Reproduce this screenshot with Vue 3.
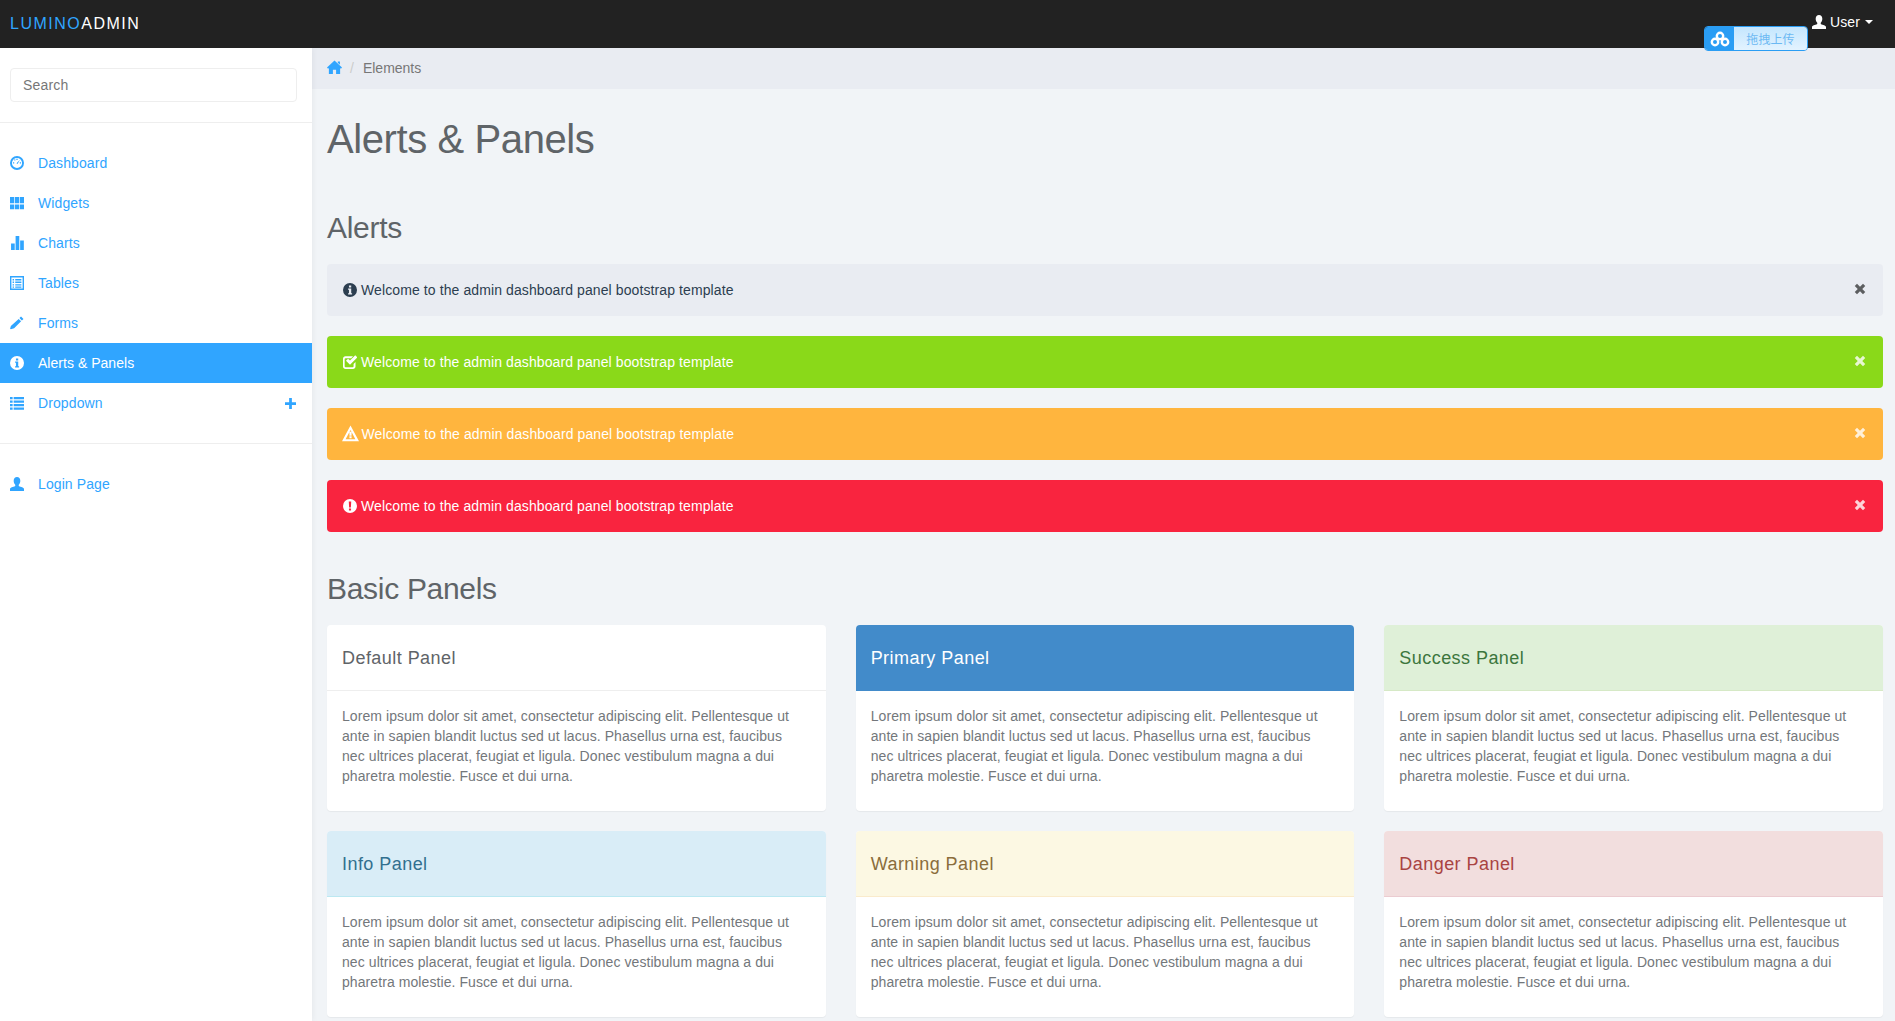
<script setup>
const icons = {
  dashboard: 'M8 0a8 8 0 1 0 0 16A8 8 0 1 0 8 0zm0 2.200a5.800 5.800 0 1 1 0 11.600A5.800 5.800 0 1 1 8 2.200zM7.300 3.200h1.400v1.400H7.300zM3.400 7.200h1.400v1.400H3.400zM11.200 7.200h1.400v1.400h-1.400zM4.600 4.400l1-.8.9 1-1 .8zM11.400 4.400l-2.800 4.800-1.200-.9z',
  th: 'M0 1h4.800v7.400H0zM5.600 1h4.800v7.400H5.600zM11.200 1H16v7.400h-4.800zM0 9.600h4.800V15H0zM5.600 9.600h4.800V15H5.600zM11.200 9.600H16V15h-4.800z',
  stats: 'M1.200 8.500h4.200V16H1.200zM6.400 0h4.200v16H6.400zM11.600 5h4.200v11h-4.200z',
  listalt: 'M0 0h16v16H0zm1.600 1.600v12.800h12.800V1.600zM3 3.500h1.600v1.600H3zM6 3.500h7v1.600H6zM3 6.400h1.600V8H3zM6 6.400h7V8H6zM3 9.300h1.600v1.600H3zM6 9.300h7v1.600H6zM3 12h1.600v1.400H3zM6 12h7v1.400H6z',
  pencil: 'M12.600.6l2.800 2.800-1.800 1.800-2.800-2.800zM9.900 3.300l2.800 2.800-8 8L1 15.200l-.9-.6.9-3.300z',
  info: 'M8 0a8 8 0 1 0 0 16A8 8 0 1 0 8 0zM6.800 2.800h2.600v2.400H6.800zM5.800 6.400h3.600v5.200h1v1.400H5.800v-1.400h1V7.800h-1z',
  thlist: 'M0 1h3v2.600H0zM4.200 1H16v2.600H4.200zM0 5h3v2.600H0zM4.200 5H16v2.600H4.200zM0 9h3v2.600H0zM4.200 9H16v2.600H4.200zM0 13h3v2.600H0zM4.200 13H16v2.600H4.200z',
  plus: 'M6 0h4v6h6v4h-6v6H6v-6H0V6h6z',
  user: 'M8 0c2.300 0 3.800 1.800 3.800 4.200 0 1.900-.7 3.600-1.800 4.600v1.400c.6.6 5.400 1.400 6 3.200V16H0v-2.600c.6-1.800 5.400-2.600 6-3.200V8.800C4.900 7.800 4.200 6.100 4.200 4.200 4.200 1.800 5.700 0 8 0z',
  check: 'M2.800 1.500h8.700l-2.200 2.300H3c-.7 0-1.100.4-1.100 1.100v7.900c0 .7.4 1.100 1.100 1.100h8c.7 0 1.100-.4 1.100-1.100v-2.600l2.200-2.200V13c0 1.600-1.300 2.900-2.900 2.900H2.900C1.300 15.900 0 14.600 0 13V4.400C0 2.800 1.200 1.500 2.800 1.500zM14 .4L16.400 2.800 8 11.200 3.400 6.600l2.400-2.400L8 6.400z',
  warning: 'M8 .4L16 15.400H0zM8 4.800L3.400 13.300h9.200zM7 6.400h2v3.700H7zM7 10.700h2v1.800H7z',
  exclaim: 'M8 0a8 8 0 1 0 0 16A8 8 0 1 0 8 0zM6.600 2.800h2.800L9 9.800H7zM6.800 10.800h2.400V13H6.800z',
  remove: 'M4 1l4 4 4-4 3 3-4 4 4 4-3 3-4-4-4 4-3-3 4-4-4-4z',
  home: 'M8 .5L16 8l-1.100 1.200-.9-.8V15H9.700v-4.500H6.300V15H2V8.400l-.9.8L0 8zM11.500 1.500h2.300v3.600l-2.300-2.200z'
}

const navTop = [
  { label: 'Dashboard', icon: 'dashboard' },
  { label: 'Widgets', icon: 'th' },
  { label: 'Charts', icon: 'stats' },
  { label: 'Tables', icon: 'listalt' },
  { label: 'Forms', icon: 'pencil' },
  { label: 'Alerts & Panels', icon: 'info', active: true },
  { label: 'Dropdown', icon: 'thlist', plus: true }
]

const alerts = [
  { kind: 'plain', icon: 'info' },
  { kind: 'success', icon: 'check' },
  { kind: 'warn', icon: 'warning' },
  { kind: 'danger', icon: 'exclaim' }
]

const panels = [
  { title: 'Default Panel', kind: 'default' },
  { title: 'Primary Panel', kind: 'primary' },
  { title: 'Success Panel', kind: 'success' },
  { title: 'Info Panel', kind: 'info' },
  { title: 'Warning Panel', kind: 'warning' },
  { title: 'Danger Panel', kind: 'danger' }
]

const lorem = 'Lorem ipsum dolor sit amet, consectetur adipiscing elit. Pellentesque ut ante in sapien blandit luctus sed ut lacus. Phasellus urna est, faucibus nec ultrices placerat, feugiat et ligula. Donec vestibulum magna a dui pharetra molestie. Fusce et dui urna.'
</script>

<template>
  <div class="page">
    <header class="navbar">
      <div class="brand"><span class="blue">LUMINO</span>ADMIN</div>
      <div class="user">
        <svg class="icon" viewBox="0 0 16 16"><path :d="icons.user" /></svg>
        <span>User</span>
        <i class="caret"></i>
      </div>
      <div class="upload">
        <div class="upload-icon">
          <svg viewBox="0 0 20 16" width="20" height="16" fill="none" stroke="#fff" stroke-width="2.400">
            <circle cx="10" cy="5" r="3.200" />
            <circle cx="5" cy="11" r="3.200" />
            <circle cx="15" cy="11" r="3.200" />
          </svg>
        </div>
        <div class="upload-text">拖拽上传</div>
      </div>
    </header>

    <div class="layout">
      <aside class="sidebar">
        <div class="search"><input class="search-input" placeholder="Search" /></div>
        <nav class="menu">
          <a v-for="item in navTop" :key="item.label" class="item" :class="{ active: item.active }">
            <svg class="icon side-icon" viewBox="0 0 16 16"><path :d="icons[item.icon]" fill-rule="evenodd" /></svg>
            <span>{{ item.label }}</span>
            <svg v-if="item.plus" class="icon plus" viewBox="0 0 16 16"><path :d="icons.plus" /></svg>
          </a>
        </nav>
        <nav class="menu login">
          <a class="item">
            <svg class="icon side-icon" viewBox="0 0 16 16"><path :d="icons.user" /></svg>
            <span>Login Page</span>
          </a>
        </nav>
      </aside>

      <main class="main">
        <div class="crumbs">
          <svg class="icon home" viewBox="0 0 16 16"><path :d="icons.home" /></svg>
          <span class="sep">/</span>
          <span>Elements</span>
        </div>
        <div class="content">
          <h1>Alerts &amp; Panels</h1>
          <h2>Alerts</h2>
          <div v-for="a in alerts" :key="a.kind" class="alert" :class="a.kind">
            <svg class="icon alert-icon" :class="{ wide: a.icon === 'warning' }" viewBox="0 0 16 16"><path :d="icons[a.icon]" fill-rule="evenodd" /></svg>
            <span class="alert-text">Welcome to the admin dashboard panel bootstrap template</span>
            <svg class="icon close" viewBox="0 0 16 16"><path :d="icons.remove" /></svg>
          </div>
          <h2 class="second">Basic Panels</h2>
          <div class="grid">
            <section v-for="p in panels" :key="p.kind" class="panel" :class="p.kind">
              <div class="heading">{{ p.title }}</div>
              <div class="body"><p>{{ lorem }}</p></div>
            </section>
          </div>
        </div>
      </main>
    </div>
  </div>
</template>

<style>
html, body { margin: 0; background: #f1f4f7; overflow: hidden; }
</style>

<style scoped>
.page {
  position: relative;
  height: 1021px;
  overflow: hidden;
  font-family: "Liberation Sans", Arial, sans-serif;
  font-size: 14px;
  line-height: 20px;
  letter-spacing: 0.1px;
  color: #5f6468;
  background: #f1f4f7;
}
.icon { display: block; fill: currentColor; flex: none; }
.navbar {
  position: relative;
  z-index: 2;
  height: 48px;
  background: #222;
  display: flex;
  align-items: flex-start;
  justify-content: space-between;
}
.brand {
  margin: 15px 0 0 10px;
  font-size: 16px;
  line-height: 18px;
  letter-spacing: 1.5px;
  color: #fff;
}
.blue { color: #30a5ff; }
.user {
  display: flex;
  align-items: center;
  color: #fff;
  margin: 12px 22px 0 0;
  font-size: 14px;
}
.user .icon { width: 14px; height: 14px; margin-right: 4px; }
.caret {
  margin-left: 5px;
  border-top: 4px solid #fff;
  border-left: 4px solid transparent;
  border-right: 4px solid transparent;
}
.upload {
  position: absolute;
  left: 1704px;
  top: 26px;
  width: 104px;
  height: 25px;
  box-sizing: border-box;
  border: 1px solid #2a9df4;
  border-radius: 4px;
  display: flex;
  overflow: hidden;
}
.upload-icon {
  width: 29px;
  background: #2a9df4;
  display: flex;
  align-items: center;
  justify-content: center;
}
.upload-text {
  flex: 1;
  background: linear-gradient(#c4e6fe, #e3f3ff);
  color: #6cb9f3;
  text-align: center;
  font-size: 12px;
  line-height: 23px;
  font-family: "Noto Sans CJK SC", sans-serif;
}
.layout { display: flex; }
.sidebar {
  position: relative;
  z-index: 1;
  width: 312px;
  flex: none;
  height: 973px;
  background: #fff;
  box-shadow: 1px 0 6px rgba(0, 0, 0, 0.05);
}
.search {
  padding: 20px 15px 20px 10px;
  border-bottom: 1px solid #eee;
}
.search-input {
  display: block;
  width: 100%;
  height: 34px;
  box-sizing: border-box;
  border: 1px solid #eee;
  border-radius: 4px;
  padding: 0 12px;
  font: 14px "Liberation Sans", Arial, sans-serif;
  letter-spacing: 0.2px;
  outline: none;
  color: #555;
}
.search-input::placeholder { color: #777; opacity: 1; }
.menu { padding-top: 20px; padding-bottom: 20px; border-bottom: 1px solid #eee; }
.menu.login { border-bottom: 0; }
.item {
  display: flex;
  align-items: center;
  height: 40px;
  padding: 0 15px 0 10px;
  color: #30a5ff;
}
.item.active { background: #30a5ff; color: #fff; letter-spacing: 0.03px; }
.side-icon { width: 14px; height: 14px; margin-right: 14px; }
.plus { width: 11px; height: 11px; margin-left: auto; margin-right: 1px; }
.main { flex: 1; min-width: 0; }
.crumbs {
  height: 41px;
  box-sizing: border-box;
  background: #e9ecf2;
  padding: 0 15px 2px;
  display: flex;
  align-items: center;
  color: #777;
  letter-spacing: 0;
}
.home { width: 15px; height: 15px; margin-top: -1px; color: #30a5ff; }
.sep { margin: 0 9px 0 8px; color: #ccc; }
.content { padding: 0 12px 0 15px; }
h1 {
  margin: 28px 0 50px;
  font-size: 40px;
  line-height: 44px;
  font-weight: 400;
  letter-spacing: -0.4px;
}
h2 {
  margin: 0 0 20px;
  font-size: 30px;
  line-height: 33px;
  font-weight: 400;
  letter-spacing: -0.3px;
}
h2.second { margin-top: 40px; }
.alert {
  height: 52px;
  box-sizing: border-box;
  border-radius: 4px;
  padding: 0 16px;
  margin-bottom: 20px;
  display: flex;
  align-items: center;
  color: #fff;
}
.alert.plain { background: #e9ecf2; color: #2c3e50; }
.alert.success { background: #8ad919; }
.alert.warn { background: #ffb53e; }
.alert.danger { background: #f9243f; }
.alert-icon { width: 14px; height: 14px; margin-right: 4px; }
.alert-icon.wide { width: 17px; height: 17px; margin: -1px 3px 0 -1.5px; }
.alert-text { flex: 1; }
.close { width: 12px; height: 12px; margin: -3px 1px 0 0; opacity: 0.8; }
.alert.plain .close { color: #000; opacity: 0.6; }
.grid {
  display: grid;
  grid-template-columns: repeat(3, 1fr);
  column-gap: 30px;
  row-gap: 20px;
}
.panel {
  background: #fff;
  border-radius: 4px;
  box-shadow: 0 1px 1px rgba(0, 0, 0, 0.05);
  overflow: hidden;
}
.heading {
  height: 66px;
  box-sizing: border-box;
  padding: 11px 15px 9px;
  line-height: 45px;
  font-size: 18px;
  letter-spacing: 0.025em;
  border-bottom: 1px solid #eee;
}
.panel.primary .heading { background: #428bca; color: #fff; border-color: #428bca; }
.panel.success .heading { background: #dff0d8; color: #3c763d; border-color: #d6e9c6; }
.panel.info .heading { background: #d9edf7; color: #31708f; border-color: #bce8f1; }
.panel.warning .heading { background: #fcf8e3; color: #8a6d3b; border-color: #faebcc; }
.panel.danger .heading { background: #f2dede; color: #a94442; border-color: #ebccd1; }
.body { padding: 15px; }
.body p { margin: 0 0 10px; padding-right: 8px; color: #73777b; letter-spacing: 0.08px; }
</style>
